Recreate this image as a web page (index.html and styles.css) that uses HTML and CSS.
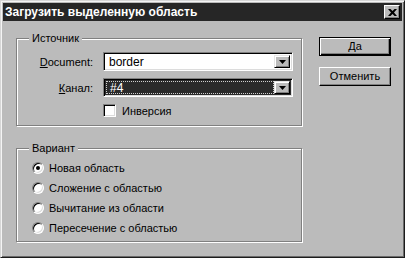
FILE: index.html
```html
<!DOCTYPE html>
<html lang="ru">
<head>
<meta charset="utf-8">
<title>Загрузить выделенную область</title>
<link rel="stylesheet" href="styles.css">
</head>
<body>
<div class="win">
  <div class="titlebar">
    <span class="title">Загрузить выделенную область</span>
    <span class="close"><svg width="9" height="7" viewBox="0 0 9 7"><path d="M0 0h2.5l2 2 2-2h2.5l-3 3.5 3 3.5h-2.5l-2-2-2 2h-2.5l3-3.5z" fill="#000"/></svg></span>
  </div>
  <div class="content">
    <div class="left">
      <div class="group g1">
        <span class="legend">Источник</span>
        <div class="form">
          <label class="lbl"><u>D</u>ocument:</label>
          <div class="combo"><span class="field">border</span><span class="drop"><svg width="7" height="4" viewBox="0 0 7 4"><path d="M0 0h7l-3.5 4z" fill="#000"/></svg></span></div>
          <label class="lbl"><u>К</u>анал:</label>
          <div class="combo sel"><span class="field"><span class="focus">#4</span></span><span class="drop"><svg width="7" height="4" viewBox="0 0 7 4"><path d="M0 0h7l-3.5 4z" fill="#000"/></svg></span></div>
          <span></span>
          <div class="check"><span class="box"></span><span>Инверсия</span></div>
        </div>
      </div>
      <div class="group g2">
        <span class="legend">Вариант</span>
        <div class="radio"><span class="rb on"></span><span>Новая область</span></div>
        <div class="radio"><span class="rb"></span><span>Сложение с областью</span></div>
        <div class="radio"><span class="rb"></span><span>Вычитание из области</span></div>
        <div class="radio"><span class="rb"></span><span>Пересечение с областью</span></div>
      </div>
    </div>
    <div class="buttons">
      <div class="btn def"><span>Да</span></div>
      <div class="btn"><span>Отменить</span></div>
    </div>
  </div>
</div>
</body>
</html>
```
FILE: styles.css
```css
* { box-sizing: border-box; }
html, body { margin: 0; padding: 0; background: #bbbbbb; }
body { font-family: "Liberation Sans", Arial, sans-serif; font-size: 11px; color: #000; }
.win {
  width: 405px; height: 258px;
  background: #bbbbbb;
  border: 1px solid;
  border-color: #d6d6d6 #1c1c1c #1c1c1c #d6d6d6;
  box-shadow: inset 1px 1px 0 #f4f4f4, inset -1px -1px 0 #6a6a6a;
  padding: 2px;
}
.titlebar {
  height: 18px; background: #262626; color: #fff;
  display: flex; align-items: center; justify-content: space-between;
  padding: 0 2px 0 2px;
}
.title { font-weight: bold; font-size: 12px; }
.close {
  width: 16px; height: 14px; background: #bbbbbb;
  border: 1px solid; border-color: #fff #000 #000 #fff;
  box-shadow: inset -1px -1px 0 #808080;
  display: flex; align-items: center; justify-content: center;
}
.content { display: flex; padding-left: 13px; gap: 17px; }
.left { margin-top: 17px; width: 286px; display: flex; flex-direction: column; gap: 22px; }
.group {
  position: relative;
  border: 1px solid #808080;
  box-shadow: inset 1px 1px 0 #fff, 1px 1px 0 #fff;
}
.legend {
  position: absolute; top: -8px; left: 12px;
  padding: 0 3px; background: #bbbbbb; line-height: 14px;
}
.g1 { height: 88px; padding-top: 13px; }
.form {
  display: grid; grid-template-columns: 76px 190px; column-gap: 10px;
  grid-template-rows: 19px 19px 13px; row-gap: 7px; align-items: center;
}
.lbl { text-align: right; }
.combo {
  height: 19px; display: flex;
  border: 1px solid; border-color: #808080 #fff #fff #808080;
  box-shadow: inset 1px 1px 0 #000, inset -1px -1px 0 #dcdcdc;
  background: #fff; padding: 2px;
  font-size: 12px;
}
.field { flex: 1; display: flex; align-items: center; padding-left: 3px; }
.sel { background: #2a2a2a; }
.sel .field { color: #fff; padding: 0; }
.focus {
  flex: 1; height: 100%; display: flex; align-items: center; padding-left: 4px;
  outline: 1px dotted #cfcfcf; outline-offset: -1px;
}
.drop {
  width: 16px; background: #bbbbbb;
  border: 1px solid; border-color: #e6e6e6 #000 #000 #e6e6e6;
  box-shadow: inset 1px 1px 0 #fff, inset -1px -1px 0 #808080;
  display: flex; align-items: center; justify-content: center;
}
.check { display: flex; align-items: center; gap: 6px; height: 13px; }
.box {
  width: 13px; height: 13px; background: #fff;
  border: 1px solid; border-color: #808080 #fff #fff #808080;
  box-shadow: inset 1px 1px 0 #000, inset -1px -1px 0 #dcdcdc;
}
.g2 { height: 94px; padding: 9px 0 0 15px; }
.radio { height: 20px; display: flex; align-items: center; gap: 5px; }
.rb {
  width: 12px; height: 12px; border-radius: 50%;
  background: #fff;
  border: 1px solid; border-color: #808080 #fff #fff #808080;
  box-shadow: inset 1px 1px 0 #000, inset -1px -1px 0 #dcdcdc;
  display: flex; align-items: center; justify-content: center;
}
.rb.on::after { content: ""; width: 4px; height: 4px; border-radius: 50%; background: #000; }
.buttons { margin-top: 16px; display: flex; flex-direction: column; gap: 11px; }
.btn {
  width: 72px; height: 19px; display: flex; align-items: center; justify-content: center;
  border: 1px solid; border-color: #fff #000 #000 #fff;
  box-shadow: inset -1px -1px 0 #808080;
  line-height: 1;
}
.btn.def { border-color: #000; box-shadow: inset 1px 1px 0 #fff, inset -1px -1px 0 #000, inset -2px -2px 0 #808080; }
```
